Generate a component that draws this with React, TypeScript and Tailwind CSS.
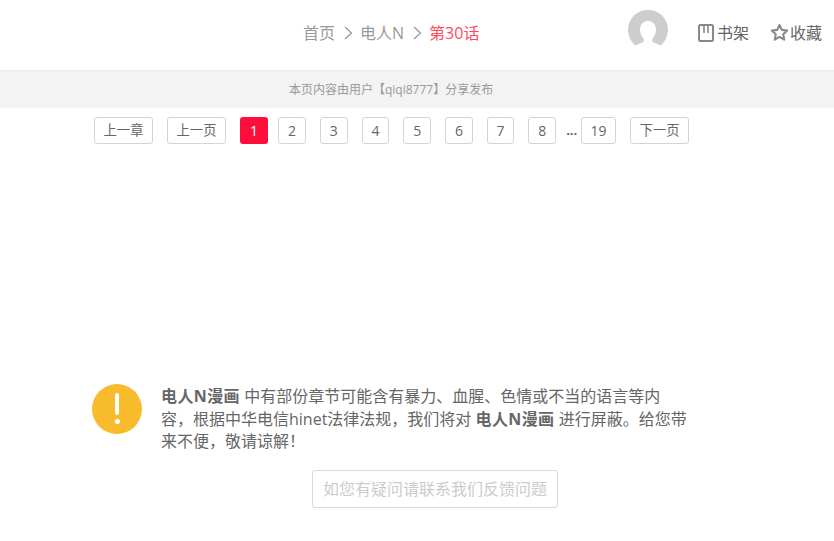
const font = "font-['Open_Sans','Noto_Sans_CJK_SC',sans-serif]";

const pages = ["2", "3", "4", "5", "6", "7", "8"];

function PageButton({ label, className }: { label: string; className: string }) {
  return (
    <a className={`flex h-[27px] items-center justify-center rounded-[3px] border border-[#d4d4d4] text-[#666] ${className}`}>
      {label}
    </a>
  );
}

function Chevron() {
  return (
    <svg width="9" height="14" viewBox="0 0 9 14" fill="none" stroke="#999" strokeWidth="1.3" className="ml-[9px] mr-[7px]">
      <path d="M1 1l6.5 6L1 13" />
    </svg>
  );
}

export default function App() {
  return (
    <div className={`${font} min-h-screen bg-white`}>
      {/* top bar */}
      <header className="flex h-[71px] items-center border-b border-[#ececec]">
        <nav className="ml-[303px] mb-[4px] flex items-center text-[16px] text-[#999]">
          <span>首页</span>
          <Chevron />
          <span>电人N</span>
          <Chevron />
          <span className="text-[#ff4a5c]">第30话</span>
        </nav>
        <div className="ml-auto mb-[4px] flex items-center text-[16px] text-[#666]">
          <svg width="40" height="40" viewBox="0 0 40 40" className="mr-[30px] mb-[6px]">
            <path
              fill="#cdcdcd"
              d="M7.5 35.5A20 20 0 1 1 32.5 35.5L25 32.3C24 31.5 24 29.2 24.6 28.4C26.6 26.2 28 23 28 19.5C28 14.5 24.5 11 20 11C15.5 11 12 14.5 12 19.5C12 23 13.4 26.2 15.4 28.4C16 29.2 16 31.5 15 32.3Z"
            />
          </svg>
          <svg width="16" height="18" viewBox="0 0 16 18" fill="none" stroke="#888" strokeWidth="2" className="mr-[3px]">
            <rect x="1" y="1" width="14" height="16" rx="1.5" />
            <path d="M6 1v8M10 1v8" strokeWidth="1.6" />
          </svg>
          <span className="w-[33px]">书架</span>
          <svg width="19" height="19" viewBox="0 0 24 24" fill="none" stroke="#888" strokeWidth="2.6" strokeLinejoin="round" className="ml-[20px] mr-[1px] mb-[2px]">
            <path d="M12 2.5l2.9 6.2 6.8.8-5 4.7 1.3 6.8-6-3.4-6 3.4 1.3-6.8-5-4.7 6.8-.8z" />
          </svg>
          <span className="mr-[12px]">收藏</span>
        </div>
      </header>

      <div className="flex h-[37px] items-center bg-[#f3f3f3] pl-[289px] pt-[1px] text-[12px] text-[#999]">
        本页内容由用户【qiqi8777】分享发布
      </div>

      {/* pagination */}
      <div className="ml-[94px] mt-[9px] flex items-center text-[14px]">
        <PageButton label="上一章" className="w-[59px] text-[13.3px]" />
        <PageButton label="上一页" className="ml-[14px] w-[59px] text-[13.3px]" />
        <a className="ml-[14px] flex h-[27px] w-[28px] items-center justify-center rounded-[3px] bg-[#ff0e3c] text-white">1</a>
        <PageButton label={pages[0]} className="ml-[10px] w-[28px]" />
        {pages.slice(1).map((p) => (
          <PageButton key={p} label={p} className="ml-[14px] w-[27.7px]" />
        ))}
        <span className="w-[25px] pl-[10px] text-[13px] font-bold text-[#666]">...</span>
        <PageButton label="19" className="w-[35px]" />
        <PageButton label="下一页" className="ml-[14px] w-[59px] text-[13.3px]" />
      </div>

      {/* notice */}
      <div className="ml-[92px] mt-[240px] flex w-[600px] items-start">
        <div className="relative h-[50px] w-[50px] shrink-0 rounded-full bg-[#f8bb2c]">
          <span className="absolute left-[23px] top-[9px] h-[22px] w-[4px] rounded-[2px] bg-white" />
          <span className="absolute left-[22.5px] top-[35px] h-[5px] w-[5px] rounded-full bg-white" />
        </div>
        <p className="ml-[19px] mt-[1px] w-[528px] text-[16px] leading-[22.5px] text-[#666]">
          <b className="tracking-[0.4px]">电人N漫画</b> 中有部份章节可能含有暴力、血腥、色情或不当的语言等内容，根据中华电信hinet法律法规，我们将对 <b className="tracking-[0.4px]">电人N漫画</b> 进行屏蔽。给您带来不便，敬请谅解！
        </p>
      </div>

      <div className="mt-[17.5px] ml-[312px] flex h-[38px] w-[246px] items-center justify-center rounded-[3px] border border-[#d9d9d9] text-[16px] text-[#ccc]">
        如您有疑问请联系我们反馈问题
      </div>
    </div>
  );
}
